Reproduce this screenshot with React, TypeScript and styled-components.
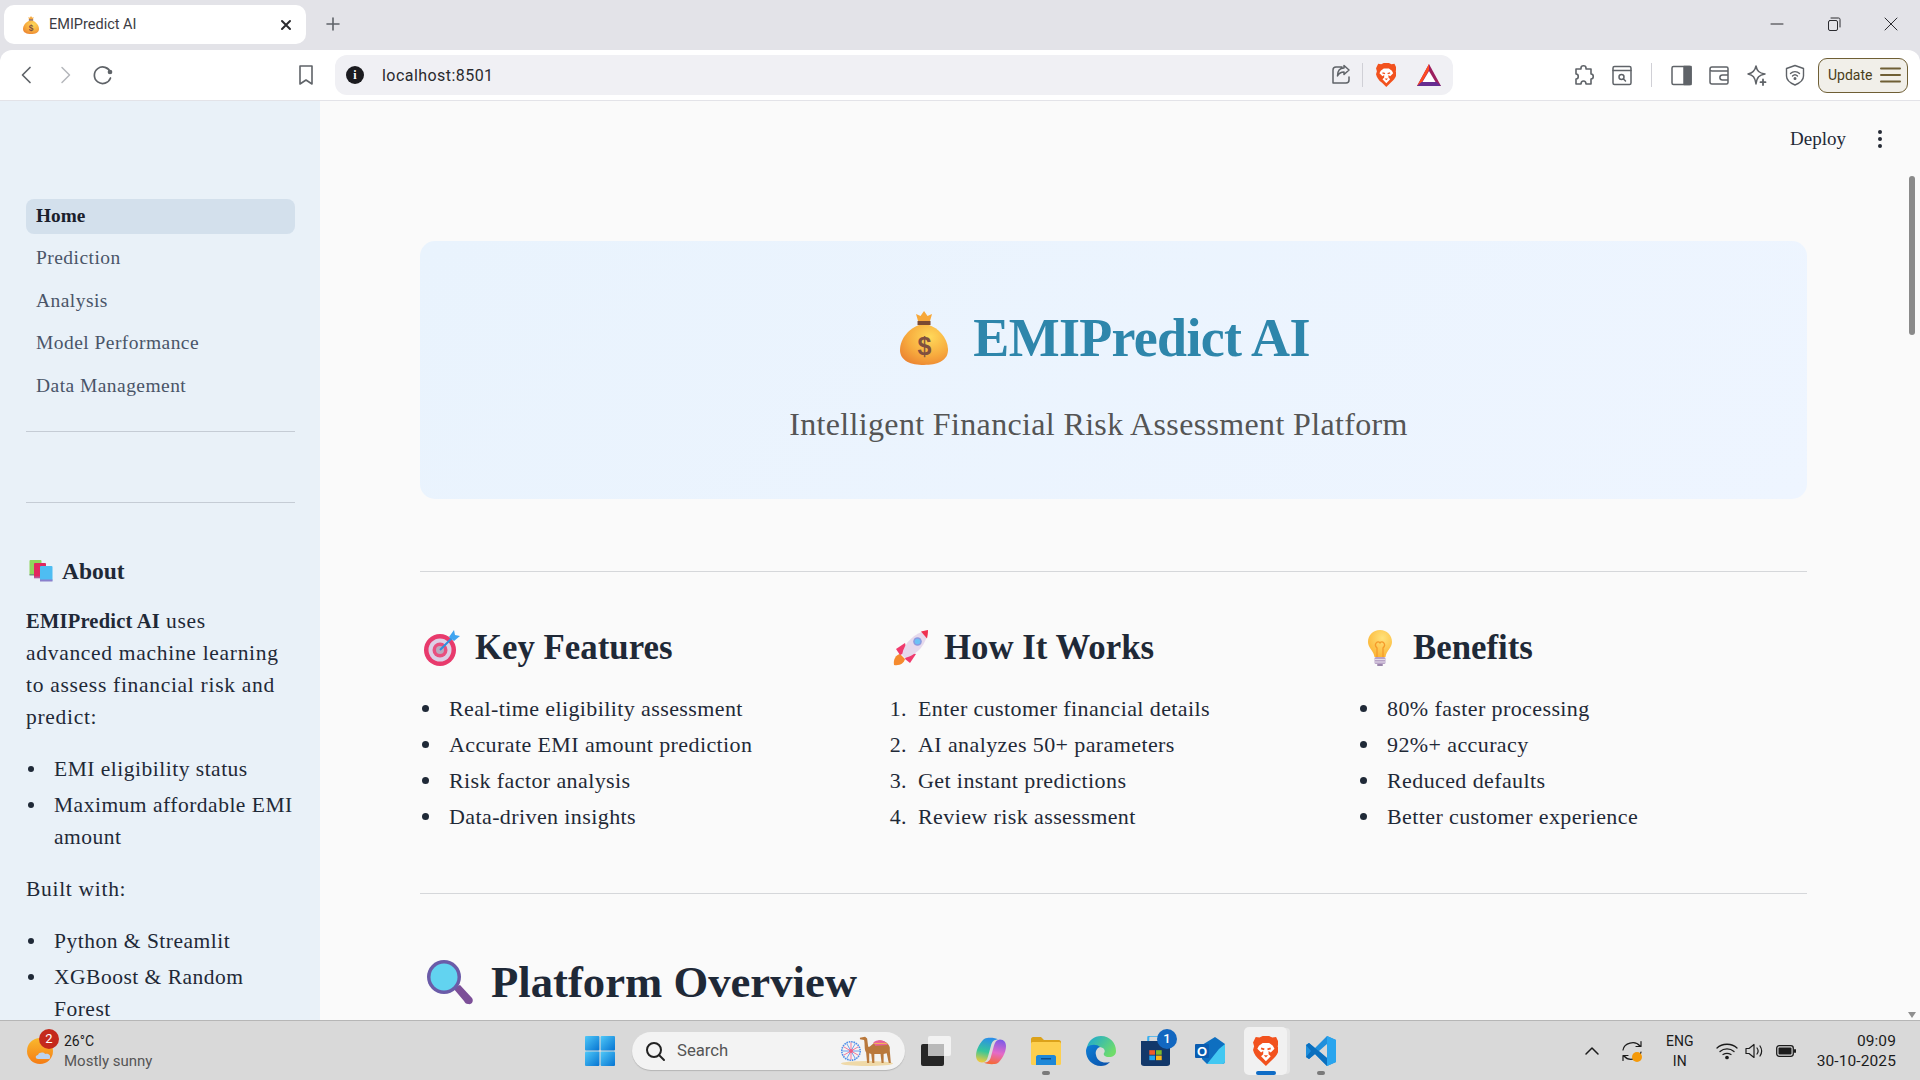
import React, { useId } from "react";
import styled, { createGlobalStyle, css } from "styled-components";

const SERIF = `"Liberation Serif", "Noto Serif", serif`;
const UI = `Roboto, "Open Sans", sans-serif`;

const GlobalStyle = createGlobalStyle`
  html, body { margin: 0; padding: 0; height: 100%; overflow: hidden; }
  #root { height: 100%; }
  * { box-sizing: border-box; }
`;

/* ---------- emoji drawings ---------- */

function MoneyBag({ size }: { size: number }) {
  const id = useId();
  return (
    <svg width={size * 0.89} height={size} viewBox="0 0 48 54">
      <defs>
        <radialGradient id={id} cx="0.62" cy="0.3" r="0.85">
          <stop offset="0" stopColor="#ffd95a" />
          <stop offset="0.55" stopColor="#f7ab3e" />
          <stop offset="1" stopColor="#e97b2e" />
        </radialGradient>
      </defs>
      <path d="M16 3 L20.5 5 L24 0 L27.5 5 L32 3 L30 10 H18 Z" fill="#f7a83a" />
      <rect x="17.5" y="10" width="13" height="4" fill="#7b4a32" />
      <path d="M19 14 H29 C38 17 48 27 48 39 C48 50 37 54 24 54 C11 54 0 50 0 39 C0 27 10 17 19 14 Z" fill={`url(#${id})`} />
      <text x="24" y="44" textAnchor="middle" fontSize="25" fontWeight="700" fontFamily="Liberation Sans, sans-serif" fill="#80503f">$</text>
    </svg>
  );
}

function Books() {
  return (
    <svg width="24" height="22" viewBox="0 0 24 22">
      <rect x="0.5" y="0" width="12" height="15" rx="1" fill="#8fd65c" />
      <rect x="0.5" y="14" width="12" height="1.5" fill="#6f9c7a" />
      <rect x="5" y="3" width="12" height="15" rx="1" fill="#e2275f" />
      <rect x="5" y="16.5" width="12" height="1.8" fill="#b9559a" />
      <rect x="11" y="6" width="12.5" height="15" rx="1" fill="#4ebdf2" />
      <rect x="11" y="19.5" width="12.5" height="2" fill="#8a80cc" />
    </svg>
  );
}

function TargetEmoji() {
  return (
    <svg width="36" height="36" viewBox="0 0 36 36">
      <circle cx="16" cy="20" r="16" fill="#e83a6c" />
      <circle cx="16" cy="20" r="11.5" fill="#dcd0e6" />
      <circle cx="16" cy="20" r="7.5" fill="#e8507f" />
      <circle cx="16" cy="20" r="4" fill="#b9aabf" />
      <path d="M16 20 L30 6" stroke="#2f8fe0" strokeWidth="2" />
      <path d="M25 7 L30 0 L31 5 L36 6 L30 11 Z" fill="#3fa4f0" />
    </svg>
  );
}

function RocketEmoji() {
  return (
    <svg width="36" height="36" viewBox="0 0 36 36">
      <path d="M1 35 C0 29 3 25 7 24 L12 29 C11 33 7 36 1 35 Z" fill="#f58a2e" />
      <path d="M3 19 L12 13 L14 22 L7 25 Z" fill="#f03a6d" />
      <path d="M17 33 L23 24 L14 22 L12 29 Z" fill="#f03a6d" />
      <path d="M9 25 C11 13 21 3 35 0 C34 14 24 25 12 28 Z" fill="#e6d9ec" />
      <path d="M28 1.500 L35 0 C35 3 34.500 6 34 8.500 Z" fill="#f0304f" />
      <circle cx="24.500" cy="11.500" r="4.300" fill="#8d9ae0" />
      <circle cx="24.500" cy="11.500" r="2.800" fill="#6cc1f5" />
    </svg>
  );
}

function BulbEmoji() {
  const id = useId();
  return (
    <svg width="24" height="36" viewBox="0 0 24 36">
      <defs>
        <radialGradient id={id} cx="0.6" cy="0.3" r="0.8">
          <stop offset="0" stopColor="#ffe27a" />
          <stop offset="1" stopColor="#fbb02e" />
        </radialGradient>
      </defs>
      <path d="M12 0 C19 0 24 5 24 12 C24 18 18 21 17.500 27 H6.500 C6 21 0 18 0 12 C0 5 5 0 12 0 Z" fill={`url(#${id})`} />
      <path d="M9 27 V18 C5 14 10 10 12 13 C14 10 19 14 15 18 V27" fill="none" stroke="#f59a2a" strokeWidth="1.300" />
      <rect x="6.500" y="27" width="11" height="7" rx="1.500" fill="#b8a3c6" />
      <rect x="6.500" y="29" width="11" height="1" fill="#e4dcea" />
      <rect x="6.500" y="31.500" width="11" height="1" fill="#e4dcea" />
      <rect x="9" y="34" width="6" height="2" rx="1" fill="#9a86ab" />
    </svg>
  );
}

function LensEmoji() {
  return (
    <svg width="48" height="46" viewBox="0 0 48 46">
      <path d="M27 29 L34 26 L46 39 C48 42 46 46 42 45 C40 45 39 44 38 42 Z" fill="#7c4f98" />
      <circle cx="18" cy="18" r="17" fill="#6a5ba8" />
      <circle cx="18" cy="18" r="13.500" fill="#62d3f0" />
    </svg>
  );
}

/* ---------- brand marks ---------- */

function BraveMark({ size }: { size: number }) {
  return (
    <svg width={size * 0.86} height={size} viewBox="0 0 24 28">
      <path d="M6 1.500 L9 0 H15 L18 1.500 L21.500 1 L24 6 L23 9.500 L24 13 C23 17 21 20 17 23 L12 28 L7 23 C3 20 1 17 0 13 L1 9.500 L0 6 L2.500 1 Z" fill="#f2521e" />
      <path d="M5.500 9 L9 6.500 H15 L18.500 9 L20 12 L16.500 15.500 L14.500 14 L14.500 17 L16.500 19 L12 23.500 L7.500 19 L9.500 17 L9.500 14 L7.500 15.500 L4 12 Z" fill="#fff" />
      <path d="M7.500 11.500 L10.500 12.500 M16.500 11.500 L13.500 12.500" stroke="#f2521e" strokeWidth="1.600" />
      <path d="M10 18 H14 L12 20 Z" fill="#f2521e" />
    </svg>
  );
}

function BatMark() {
  return (
    <svg width="24" height="22" viewBox="0 0 24 22">
      <path d="M12 0 L24 22 H0 Z" fill="#9c1f5f" />
      <path d="M12 0 L12 6 L4.500 19 L0 22 Z" fill="#ff4b22" />
      <path d="M0 22 L4.500 18 H19.500 L24 22 Z" fill="#662d91" />
      <path d="M12 7 L18.500 18 H5.500 Z" fill="#fff" />
    </svg>
  );
}

function WindowsLogo() {
  const id = useId();
  return (
    <svg width="30" height="30" viewBox="0 0 30 30">
      <defs>
        <linearGradient id={id} x1="0" y1="0" x2="1" y2="1">
          <stop offset="0" stopColor="#4fc8f8" />
          <stop offset="1" stopColor="#0674d2" />
        </linearGradient>
      </defs>
      <rect x="0" y="0" width="14.400" height="14.400" rx="1" fill={`url(#${id})`} />
      <rect x="15.600" y="0" width="14.400" height="14.400" rx="1" fill={`url(#${id})`} />
      <rect x="0" y="15.600" width="14.400" height="14.400" rx="1" fill={`url(#${id})`} />
      <rect x="15.600" y="15.600" width="14.400" height="14.400" rx="1" fill={`url(#${id})`} />
    </svg>
  );
}

function FairScene() {
  const spokes = Array.from({ length: 12 }, (_, i) => (i * Math.PI) / 6);
  return (
    <svg width="52" height="30" viewBox="0 0 52 30">
      <ellipse cx="26" cy="27.500" rx="26" ry="2.500" fill="#efd9a8" />
      <circle cx="10" cy="15" r="9.200" fill="none" stroke="#4f8fe8" strokeWidth="1.600" strokeDasharray="1.600 0.800" />
      {spokes.map((a, i) => (
        <line key={a} x1="10" y1="15" x2={10 + 8.500 * Math.cos(a)} y2={15 + 8.500 * Math.sin(a)} stroke={i % 2 ? "#f0789a" : "#6aa0ee"} strokeWidth="1" />
      ))}
      <circle cx="10" cy="15" r="2" fill="#ef5f86" />
      <g transform="translate(-2.700 0) scale(1.030 0.820)">
        <path d="M21 2 L26 1 L28 3 L29 13 C31 14 33 9 38 6 C43 4 49 8 50 14 L50 18 L51 33 H49 L47 21 L44 22 L44 33 H42 L41 22 L35 22 L35 33 H33 L32 22 L30 21 L30 33 H28 L27 20 C25 17 26 10 25 5 L21 4 Z" fill="#b9783c" />
        <path d="M34 8 C38 3 46 5 48 11 L36 12 Z" fill="#e9609a" />
        <path d="M35 9 L47 9" stroke="#f3c04e" strokeWidth="1.200" />
      </g>
    </svg>
  );
}

function TaskView() {
  return (
    <svg width="30" height="30" viewBox="0 0 30 30">
      <rect x="0" y="8" width="23" height="22" rx="2" fill="#262626" />
      <rect x="7" y="0" width="23" height="20" rx="2" fill="#f6f6f6" fillOpacity="0.85" />
      <rect x="7" y="8" width="16" height="12" fill="#b9b9b9" />
    </svg>
  );
}

function Copilot() {
  const a = useId();
  const b = useId();
  const lobe = "M9 1 C11 0 20 0 22 2 C18 2 16 4 15 8 L12 19 C11 23 9 25 6 25 C2 25 0 22 0 18 C0 12 5 3 9 1 Z";
  return (
    <svg width="30" height="28" viewBox="0 0 30 27">
      <defs>
        <linearGradient id={a} x1="0.5" y1="0" x2="0.3" y2="1">
          <stop offset="0" stopColor="#2a8fe8" />
          <stop offset="0.55" stopColor="#36c79a" />
          <stop offset="1" stopColor="#f4c93a" />
        </linearGradient>
        <linearGradient id={b} x1="0.5" y1="0" x2="0.3" y2="1">
          <stop offset="0" stopColor="#f56a3a" />
          <stop offset="0.45" stopColor="#e56ac8" />
          <stop offset="1" stopColor="#7a5ae8" />
        </linearGradient>
      </defs>
      <path d={lobe} fill={`url(#${a})`} />
      <path d={lobe} transform="rotate(180 15 13.500)" fill={`url(#${b})`} />
    </svg>
  );
}

function Explorer() {
  return (
    <svg width="30" height="28" viewBox="0 0 30 28">
      <path d="M0 2 C0 1 1 0 2 0 H10 L13 3 H28 C29 3 30 4 30 5 V10 H0 Z" fill="#dca21a" />
      <rect x="0" y="5" width="30" height="23" rx="1.500" fill="#fdcf4e" />
      <path d="M5 28 V20 C5 19 6 18 7 18 H23 C24 18 25 19 25 20 V28 Z" fill="#1e88d8" />
      <rect x="10" y="21" width="10" height="1.500" fill="#0c4f8e" />
    </svg>
  );
}

function Edge() {
  const a = useId();
  const b = useId();
  return (
    <svg width="30" height="30" viewBox="0 0 30 30">
      <defs>
        <linearGradient id={a} x1="0" y1="0" x2="1" y2="0.6">
          <stop offset="0" stopColor="#19a6d8" />
          <stop offset="1" stopColor="#6fdc6a" />
        </linearGradient>
        <linearGradient id={b} x1="0" y1="0" x2="1" y2="1">
          <stop offset="0" stopColor="#0e7fd6" />
          <stop offset="1" stopColor="#0a4fa8" />
        </linearGradient>
      </defs>
      <path d="M1 11 C3 4 8 0 15 0 C24 0 30 7 30 15 C30 19 27 21 23 21 C19 21 17 19 18 17 C20 15 18 11 13 11 C8 11 4 12 1 11 Z" fill={`url(#${a})`} />
      <path d="M1 11 C5 8 11 8 14 11 C11 12 9 15 10 19 C11 25 17 28 24 26 C21 29 18 30 15 30 C6 30 0 23 0 15 C0 14 0.500 12 1 11 Z" fill={`url(#${b})`} />
    </svg>
  );
}

function Store() {
  return (
    <svg width="29" height="30" viewBox="1 2 28 36" preserveAspectRatio="none">
      <path d="M1 8 H29 V35 C29 37 28 38 26 38 H4 C2 38 1 37 1 35 Z" fill="#12386a" />
      <path d="M8 8 V4 C8 3 9 2 10 2 H20 C21 2 22 3 22 4 V8" fill="none" stroke="#3ab0f0" strokeWidth="2" />
      <rect x="9" y="19" width="5.500" height="5.500" fill="#f05a2a" />
      <rect x="15.500" y="19" width="5.500" height="5.500" fill="#7fba2a" />
      <rect x="9" y="25.500" width="5.500" height="5.500" fill="#20a4ef" />
      <rect x="15.500" y="25.500" width="5.500" height="5.500" fill="#fdb91a" />
    </svg>
  );
}

function Outlook() {
  return (
    <svg width="32" height="28" viewBox="0 0 32 28">
      <path d="M7 8 L20 0 L30 7 V24 C30 26 29 27 27 27 H12 L7 22 Z" fill="#0e6fc0" />
      <path d="M12 27 L24 12 L30 7 V24 C30 26 29 27 27 27 Z" fill="#42c8f2" />
      <rect x="0" y="7" width="14" height="14" rx="1" fill="#0a5cb0" />
      <text x="7" y="18.500" textAnchor="middle" fontSize="13" fontWeight="700" fontFamily="Liberation Sans, sans-serif" fill="#fff">O</text>
    </svg>
  );
}

function VSCode() {
  return (
    <svg width="30" height="30" viewBox="0 0 30 30">
      <path d="M21 0 L30 4 V26 L21 30 L9 18 L3 23 L0 21 V9 L3 7 L9 12 Z M21 8 L13 15 L21 22 Z" fill="#1f8fdc" fillRule="evenodd" />
      <path d="M21 0 L30 4 V26 L21 30 Z M21 8 V22 L21 8 Z" fill="#2aa5ee" />
      <path d="M0 9 L3 7 L21 22 V30 L9 18 L3 23 L0 21 L5 15 Z" fill="#0b6fbe" />
    </svg>
  );
}

/* ---------- stroke icons ---------- */

const Stroke = ({ w = 24, h = 24, sw = 1.6, color = "#5f6368", children }: { w?: number; h?: number; sw?: number; color?: string; children: React.ReactNode }) => (
  <svg width={w} height={h} viewBox={`0 0 ${w} ${h}`} fill="none" stroke={color} strokeWidth={sw} strokeLinecap="round" strokeLinejoin="round">
    {children}
  </svg>
);

/* ---------- layout ---------- */

const Screen = styled.div`
  height: 100vh;
  display: flex;
  flex-direction: column;
  background: #e3e3e8;
  overflow: hidden;
`;

const TabStrip = styled.div`
  height: 50px;
  display: flex;
  align-items: flex-start;
  flex: none;
`;

const Tab = styled.div`
  width: 302px;
  height: 39px;
  margin: 5px 0 0 4px;
  padding: 0 14px 0 19px;
  background: #fff;
  border-radius: 10px;
  display: flex;
  align-items: center;
  font: 14.5px ${UI};
  color: #3c3c43;
`;

const TabTitle = styled.span`
  margin-left: 10px;
  flex: 1;
`;

const NewTab = styled.div`
  margin: 12px 0 0 15px;
  width: 24px;
  height: 24px;
`;

const WindowControls = styled.div`
  margin-left: auto;
  display: flex;
  margin-right: 1px;
`;

const WindowBtn = styled.div`
  width: 57px;
  height: 48px;
  display: flex;
  align-items: center;
  justify-content: center;
`;

const Toolbar = styled.div`
  height: 51px;
  flex: none;
  background: #fff;
  border-radius: 12px 12px 0 0;
  border-bottom: 1px solid #e3e3e8;
  display: flex;
  align-items: center;
  padding-left: 8px;
`;

const IconBtn = styled.div<{ $ml?: number }>`
  width: 38px;
  height: 38px;
  flex: none;
  margin-left: ${(p) => p.$ml ?? 0}px;
  display: flex;
  align-items: center;
  justify-content: center;
`;

const UrlBar = styled.div`
  width: 1118px;
  height: 40px;
  margin-left: 10px;
  padding: 0 10px 0 11px;
  flex: none;
  background: #f0f0f4;
  border-radius: 12px;
  display: flex;
  align-items: center;
  font: 16px ${UI};
  color: #2a2a2e;
`;

const UrlInfo = styled.div`
  width: 18px;
  height: 18px;
  border-radius: 50%;
  background: #1c1c20;
  color: #fff;
  font: 700 12px/18px "Liberation Serif", serif;
  text-align: center;
  margin-right: 18px;
`;

const UrlText = styled.span`
  flex: 1;
  letter-spacing: 0.45px;
`;

const UrlIcon = styled.div<{ $w: number; $ml?: number }>`
  width: ${(p) => p.$w}px;
  margin-left: ${(p) => p.$ml ?? 0}px;
  display: flex;
  justify-content: center;
  align-items: center;
`;

const BarDivider = styled.div<{ $h: number; $ml?: number; $mr?: number }>`
  width: 1px;
  height: ${(p) => p.$h}px;
  background: #d0d0d6;
  flex: none;
  margin: 0 ${(p) => p.$mr ?? 0}px 0 ${(p) => p.$ml ?? 0}px;
`;

const UpdateBtn = styled.div`
  width: 90px;
  height: 35px;
  margin-left: 4px;
  flex: none;
  border: 1.5px solid #6f5f35;
  border-radius: 9px;
  background: #f1efe9;
  display: flex;
  align-items: center;
  justify-content: space-between;
  padding: 0 6px 0 9px;
  font: 14px ${UI};
  color: #4a3d18;
`;

const Body = styled.div`
  flex: 1;
  min-height: 0;
  display: flex;
  position: relative;
`;

const Sidebar = styled.aside`
  width: 320px;
  flex: none;
  background: #e9f1f8;
  padding: 98px 25px 0 26px;
  font-family: ${SERIF};
  color: #1f2937;
  overflow: hidden;
`;

const NavList = styled.nav`
  display: flex;
  flex-direction: column;
  gap: 7.4px;
`;

const NavItem = styled.div<{ $active?: boolean }>`
  height: 35px;
  line-height: 34px;
  padding-left: 10px;
  border-radius: 8px;
  font-size: ${(p) => (p.$active ? 19.3 : 19.5)}px;
  letter-spacing: ${(p) => (p.$active ? 0 : 0.45)}px;
  background: ${(p) => (p.$active ? "#d3e0ec" : "transparent")};
  color: ${(p) => (p.$active ? "#1a202c" : "#4a5568")};
  font-weight: ${(p) => (p.$active ? 700 : 400)};
`;

const Rule = styled.hr<{ $mt: number; $color?: string }>`
  border: 0;
  height: 1px;
  margin: ${(p) => p.$mt}px 0 0;
  background: ${(p) => p.$color ?? "#c5ccd5"};
`;

const AboutTitle = styled.h3`
  margin: 52px 0 0;
  display: flex;
  align-items: center;
  gap: 9px;
  padding-left: 3px;
  font-size: 23.5px;
  line-height: 32px;
  font-weight: 700;
  color: #1f2937;
`;

const SideText = styled.p<{ $mt: number }>`
  margin: ${(p) => p.$mt}px 0 0;
  font-size: 21.5px;
  line-height: 32px;
  letter-spacing: 0.7px;

  strong {
    font-size: 20.5px;
    letter-spacing: 0.22px;
  }
`;

const SideList = styled.ul`
  margin: 20px 0 0;
  padding-left: 28px;
  list-style: none;
  font-size: 21.5px;
  line-height: 32px;
  letter-spacing: 0.5px;

  li + li {
    margin-top: 4px;
  }
`;

const SideItem = styled.li`
  position: relative;

  &::before {
    content: "";
    position: absolute;
    left: -26px;
    top: 13px;
    width: 6px;
    height: 6px;
    border-radius: 50%;
    background: #1f2937;
  }
`;

const Main = styled.main`
  flex: 1;
  min-width: 0;
  background: #fafafa;
  font-family: ${SERIF};
  color: #1f2937;
  overflow: hidden;
`;

const MainHeader = styled.header`
  height: 76px;
  display: flex;
  align-items: center;
  justify-content: flex-end;
  padding-right: 38px;
  gap: 32px;
  font-size: 19px;
  color: #1f2937;
`;

const Kebab = styled.div`
  width: 4px;
  display: flex;
  flex-direction: column;
  gap: 3px;

  i {
    width: 4px;
    height: 4px;
    border-radius: 50%;
    background: #262b36;
  }
`;

const Content = styled.div`
  padding: 64px 113px 0 100px;
`;

const Hero = styled.section`
  height: 258px;
  border-radius: 15px;
  background: linear-gradient(135deg, #e9f3fd, #eef5ff);
  display: flex;
  flex-direction: column;
  align-items: center;
  padding: 67px 17px 0 0;
`;

const HeroTitle = styled.h1`
  margin: 0;
  display: flex;
  align-items: center;
  gap: 25px;
  font-size: 54px;
  line-height: 60px;
  letter-spacing: -0.7px;
  font-weight: 700;
  color: #2e86ab;
`;

const HeroSub = styled.p`
  margin: 36px 13px 0 0;
  font-size: 32px;
  line-height: 40px;
  letter-spacing: 0.35px;
  color: #555;
`;

const Columns = styled.div`
  display: grid;
  grid-template-columns: repeat(3, 449px);
  gap: 20px;
  margin-top: 56px;
`;

const ColTitle = styled.h2`
  margin: 0;
  padding-left: 4px;
  height: 40px;
  display: flex;
  align-items: center;
  gap: 15px;
  font-size: 34.8px;
  line-height: 42px;
  font-weight: 700;
  color: #1f2937;
`;

const ColIcon = styled.span`
  width: 36px;
  display: flex;
  justify-content: center;
  align-items: center;
`;

const listType = css`
  margin: 23px 0 0;
  padding-left: 29px;
  font-size: 22px;
  line-height: 36px;
  letter-spacing: 0.4px;
  list-style: none;
`;

const BulletList = styled.ul`
  ${listType}
`;

const BulletItem = styled.li`
  position: relative;

  &::before {
    content: "";
    position: absolute;
    left: -27px;
    top: 14px;
    width: 7px;
    height: 7px;
    border-radius: 50%;
    background: #1f2937;
  }
`;

const NumberList = styled.ol`
  ${listType}
  counter-reset: step;
`;

const NumberItem = styled.li`
  position: relative;
  counter-increment: step;

  &::before {
    content: counter(step) ".";
    position: absolute;
    right: 100%;
    padding-right: 11px;
  }
`;

const OverviewTitle = styled.h2`
  margin: 60px 0 0;
  padding-left: 6px;
  display: flex;
  align-items: center;
  gap: 17px;
  font-size: 44.7px;
  line-height: 56px;
  font-weight: 700;
  color: #1f2937;
`;

const ScrollThumb = styled.div`
  position: absolute;
  right: 5px;
  top: 75px;
  width: 6px;
  height: 159px;
  border-radius: 3px;
  background: #8a8a8a;
`;

const ScrollArrow = styled.div`
  position: absolute;
  right: 4px;
  bottom: 2px;
  width: 0;
  height: 0;
  border-left: 4px solid transparent;
  border-right: 4px solid transparent;
  border-top: 6px solid #8f8f8f;
`;

/* ---------- taskbar ---------- */

const Taskbar = styled.footer`
  height: 60px;
  flex: none;
  border-top: 1px solid #b6b6b6;
  background: #d9d9d9;
  display: grid;
  grid-template-columns: 1fr auto 1fr;
  align-items: center;
  font-family: ${UI};
  color: #1c1c1c;
`;

const Weather = styled.div`
  display: flex;
  align-items: center;
  padding-left: 27px;
  gap: 9px;
  font-size: 14px;
  line-height: 20px;
`;

const WeatherIcon = styled.div`
  position: relative;
  width: 28px;
  height: 26px;
`;

const WeatherBadge = styled.span`
  position: absolute;
  top: -9px;
  right: -4px;
  width: 20px;
  height: 20px;
  border-radius: 50%;
  background: #c4291c;
  color: #fff;
  font-size: 13px;
  line-height: 20px;
  text-align: center;
`;

const WeatherNote = styled.div`
  color: #555;
  font-size: 15px;
`;

const Dock = styled.div`
  display: flex;
  align-items: center;
  margin-left: 13px;
`;

const DockSlot = styled.div<{ $active?: boolean; $open?: boolean }>`
  position: relative;
  width: 55px;
  height: 48px;
  display: flex;
  align-items: center;
  justify-content: center;
  ${(p) =>
    p.$active
      ? `background: #f1f1f1; border-radius: 5px; width: 43px; margin: 0 6px; box-shadow: 4px 0 0 -1px #e6e6e6;`
      : ""}

  &::after {
    content: "";
    display: ${(p) => (p.$open || p.$active ? "block" : "none")};
    position: absolute;
    bottom: 0;
    left: 50%;
    transform: translateX(-50%);
    height: 4px;
    border-radius: 2px;
    width: ${(p) => (p.$active ? 20 : 8)}px;
    background: ${(p) => (p.$active ? "#0f6cc6" : "#7a7a7a")};
  }
`;

const DockBadge = styled.span`
  position: absolute;
  top: 2px;
  right: 6px;
  width: 20px;
  height: 20px;
  border-radius: 50%;
  background: #1267c0;
  color: #fff;
  font-size: 13px;
  font-weight: 500;
  line-height: 20px;
  text-align: center;
`;

const SearchBox = styled.div`
  width: 273px;
  height: 38px;
  margin: 0 3px 0 17px;
  padding: 0 12px 0 12px;
  border-radius: 19px;
  background: #f3f3f3;
  box-shadow: 0 1px 1px #b5b5b5;
  display: flex;
  align-items: center;
  gap: 11px;
  font-size: 16.7px;
  color: #555;
`;

const SearchLabel = styled.span`
  flex: 1;
`;

const Tray = styled.div`
  display: flex;
  align-items: center;
  justify-content: flex-end;
  padding-right: 24px;
`;

const TraySlot = styled.div<{ $w: number }>`
  width: ${(p) => p.$w}px;
  display: flex;
  justify-content: center;
  align-items: center;
  position: relative;
`;

const SyncDot = styled.span`
  position: absolute;
  right: 16px;
  bottom: 0;
  width: 10px;
  height: 10px;
  border-radius: 50%;
  background: #f59a0a;
`;

const Lang = styled.div`
  width: 44px;
  margin-right: 11px;
  font-size: 14px;
  line-height: 20px;
  text-align: center;
`;

const Clock = styled.div`
  margin-left: 16px;
  font-size: 15.5px;
  line-height: 20px;
  letter-spacing: 0.1px;
  text-align: right;
`;

export default function App() {
  return (
    <Screen>
      <GlobalStyle />

      <TabStrip>
        <Tab>
          <MoneyBag size={18} />
          <TabTitle>EMIPredict AI</TabTitle>
          <Stroke w={12} h={12} sw={2} color="#2b2b2f">
            <path d="M2 2 L10 10 M10 2 L2 10" />
          </Stroke>
        </Tab>
        <NewTab>
          <Stroke sw={1.6} color="#5f6368">
            <path d="M12 6 V18 M6 12 H18" />
          </Stroke>
        </NewTab>
        <WindowControls>
          <WindowBtn>
            <Stroke w={14} h={14} sw={1} color="#2b2b2f">
              <path d="M1 7 H13" />
            </Stroke>
          </WindowBtn>
          <WindowBtn>
            <Stroke w={14} h={14} sw={1} color="#2b2b2f">
              <rect x="1.500" y="3.500" width="9" height="10" rx="1.500" />
              <path d="M4 1 H11.500 C12.500 1 13 1.500 13 2.500 V10" />
            </Stroke>
          </WindowBtn>
          <WindowBtn>
            <Stroke w={14} h={14} sw={1} color="#2b2b2f">
              <path d="M1 1 L13 13 M13 1 L1 13" />
            </Stroke>
          </WindowBtn>
        </WindowControls>
      </TabStrip>

      <Toolbar>
        <IconBtn>
          <Stroke sw={1.7}>
            <path d="M15 4.500 L7.500 12 L15 19.500" />
          </Stroke>
        </IconBtn>
        <IconBtn>
          <Stroke sw={1.5} color="#b5b7bb">
            <path d="M9 4.500 L16.500 12 L9 19.500" />
          </Stroke>
        </IconBtn>
        <IconBtn>
          <Stroke sw={1.7}>
            <path d="M19.500 9.500 A8.300 8.300 0 1 0 19.500 15" />
            <circle cx="19" cy="9" r="1.500" fill="#5f6368" />
          </Stroke>
        </IconBtn>
        <IconBtn $ml={165}>
          <Stroke sw={1.6}>
            <path d="M6 3 H18 V21 L12 17 L6 21 Z" />
          </Stroke>
        </IconBtn>
        <UrlBar>
          <UrlInfo>i</UrlInfo>
          <UrlText>localhost:8501</UrlText>
          <UrlIcon $w={28}>
            <Stroke sw={1.5}>
              <path d="M13 4 H7 C4.500 4 4 5 4 7 V20 H17 C19 20 20 19 20 17 V14 M20 7 L15 2.500 V5 C11 5 8.500 8 8.500 13 C10 10 12 9 15 9 V11.500 Z" />
            </Stroke>
          </UrlIcon>
          <BarDivider $h={24} $ml={7} $mr={11} />
          <UrlIcon $w={24}>
            <BraveMark size={24} />
          </UrlIcon>
          <UrlIcon $w={28} $ml={17}>
            <BatMark />
          </UrlIcon>
        </UrlBar>
        <IconBtn $ml={112}>
          <Stroke sw={1.6}>
            <path d="M9 5 C9 2 14 2 14 5 V6 H19 V11 C22 11 22 16 19 16 V21 H14 C14 17 9 17 9 21 H4 V16 C7 16 7 11 4 11 V6 H9 Z" />
          </Stroke>
        </IconBtn>
        <IconBtn>
          <Stroke sw={1.5}>
            <rect x="3" y="3.500" width="18" height="18" rx="1.500" />
            <path d="M3 7.500 H21" />
            <circle cx="11.500" cy="14" r="2.500" />
            <path d="M13.500 16 L15.500 18" />
          </Stroke>
        </IconBtn>
        <BarDivider $h={24} $ml={10} $mr={10} />
        <IconBtn>
          <Stroke sw={1.5}>
            <rect x="3" y="3.500" width="19" height="18" rx="1.500" />
            <rect x="15" y="3.500" width="7" height="18" fill="#5f6368" />
          </Stroke>
        </IconBtn>
        <IconBtn>
          <Stroke sw={1.5}>
            <path d="M21 8 V5.500 C21 4.500 20.500 4 19.500 4 H5 C3.500 4 3 5 3 6 V19 C3 20.500 4 21 5 21 H19.500 C20.500 21 21 20.500 21 19.500 V17 M3 6.500 C3 8 4 8 5 8 H21 V17 H15.500 C12 17 12 12 15.500 12 H21" />
          </Stroke>
        </IconBtn>
        <IconBtn>
          <Stroke sw={1.5}>
            <path d="M11 3 C12 8 14 10 20 11 C14 12 12 14 11 21 C10 14 8 12 3 11 C8 10 10 8 11 3 Z" />
            <path d="M18 16.500 V22 M15.500 19.200 H20.500" strokeWidth={1.8} />
          </Stroke>
        </IconBtn>
        <IconBtn>
          <Stroke sw={1.4}>
            <path d="M12 2.500 L20.500 5.500 V13 C20.500 17 17 20 12 22 C7 20 3.500 17 3.500 13 V5.500 Z" />
            <path d="M7.500 10.500 C10 8 14 8 16.500 10.500 M9.500 13 C11 11.500 13 11.500 14.500 13" />
            <circle cx="12" cy="15.500" r="0.800" fill="#5f6368" />
          </Stroke>
        </IconBtn>
        <UpdateBtn>
          Update
          <Stroke w={21} h={18} sw={2} color="#6f5f35">
            <path d="M1 2.500 H20 M1 9 H20 M1 15.500 H20" />
          </Stroke>
        </UpdateBtn>
      </Toolbar>

      <Body>
        <Sidebar>
          <NavList>
            <NavItem $active>Home</NavItem>
            <NavItem>Prediction</NavItem>
            <NavItem>Analysis</NavItem>
            <NavItem>Model Performance</NavItem>
            <NavItem>Data Management</NavItem>
          </NavList>
          <Rule $mt={27} />
          <Rule $mt={70} />
          <AboutTitle>
            <Books /> About
          </AboutTitle>
          <SideText $mt={18}>
            <strong>EMIPredict AI</strong> uses advanced machine learning to assess financial risk and predict:
          </SideText>
          <SideList>
            <SideItem>EMI eligibility status</SideItem>
            <SideItem>Maximum affordable EMI amount</SideItem>
          </SideList>
          <SideText $mt={20}>Built with:</SideText>
          <SideList>
            <SideItem>Python &amp; Streamlit</SideItem>
            <SideItem>XGBoost &amp; Random Forest</SideItem>
          </SideList>
        </Sidebar>

        <Main>
          <MainHeader>
            <span>Deploy</span>
            <Kebab>
              <i />
              <i />
              <i />
            </Kebab>
          </MainHeader>
          <Content>
            <Hero>
              <HeroTitle>
                <MoneyBag size={54} /> EMIPredict AI
              </HeroTitle>
              <HeroSub>Intelligent Financial Risk Assessment Platform</HeroSub>
            </Hero>
            <Rule $mt={72} $color="#d5d7da" />
            <Columns>
              <div>
                <ColTitle>
                  <ColIcon>
                    <TargetEmoji />
                  </ColIcon>
                  Key Features
                </ColTitle>
                <BulletList>
                  <BulletItem>Real-time eligibility assessment</BulletItem>
                  <BulletItem>Accurate EMI amount prediction</BulletItem>
                  <BulletItem>Risk factor analysis</BulletItem>
                  <BulletItem>Data-driven insights</BulletItem>
                </BulletList>
              </div>
              <div>
                <ColTitle>
                  <ColIcon>
                    <RocketEmoji />
                  </ColIcon>
                  How It Works
                </ColTitle>
                <NumberList>
                  <NumberItem>Enter customer financial details</NumberItem>
                  <NumberItem>AI analyzes 50+ parameters</NumberItem>
                  <NumberItem>Get instant predictions</NumberItem>
                  <NumberItem>Review risk assessment</NumberItem>
                </NumberList>
              </div>
              <div>
                <ColTitle>
                  <ColIcon>
                    <BulbEmoji />
                  </ColIcon>
                  Benefits
                </ColTitle>
                <BulletList>
                  <BulletItem>80% faster processing</BulletItem>
                  <BulletItem>92%+ accuracy</BulletItem>
                  <BulletItem>Reduced defaults</BulletItem>
                  <BulletItem>Better customer experience</BulletItem>
                </BulletList>
              </div>
            </Columns>
            <Rule $mt={58} $color="#d5d7da" />
            <OverviewTitle>
              <LensEmoji /> Platform Overview
            </OverviewTitle>
          </Content>
        </Main>
        <ScrollThumb />
        <ScrollArrow />
      </Body>

      <Taskbar>
        <Weather>
          <WeatherIcon>
            <svg width="28" height="26" viewBox="0 0 28 26">
              <defs>
                <linearGradient id="sunGrad" x1="0" y1="0" x2="0" y2="1">
                  <stop offset="0" stopColor="#f9b92e" />
                  <stop offset="1" stopColor="#f57c14" />
                </linearGradient>
              </defs>
              <circle cx="13" cy="13" r="13" fill="url(#sunGrad)" />
              <path d="M11 21 C8 21 8 17 11 17 C12 14 17 14 18 16 C21 15 24 17 23 20 C23 21 22 21 21 21 Z" fill="#bcd3ee" />
            </svg>
            <WeatherBadge>2</WeatherBadge>
          </WeatherIcon>
          <div>
            <div>26°C</div>
            <WeatherNote>Mostly sunny</WeatherNote>
          </div>
        </Weather>

        <Dock>
          <WindowsLogo />
          <SearchBox>
            <Stroke w={22} h={22} sw={2} color="#222">
              <circle cx="10" cy="10" r="7" />
              <path d="M15 15 L20 20" />
            </Stroke>
            <SearchLabel>Search</SearchLabel>
            <FairScene />
          </SearchBox>
          <DockSlot>
            <TaskView />
          </DockSlot>
          <DockSlot>
            <Copilot />
          </DockSlot>
          <DockSlot $open>
            <Explorer />
          </DockSlot>
          <DockSlot>
            <Edge />
          </DockSlot>
          <DockSlot>
            <Store />
            <DockBadge>1</DockBadge>
          </DockSlot>
          <DockSlot>
            <Outlook />
          </DockSlot>
          <DockSlot $active>
            <BraveMark size={30} />
          </DockSlot>
          <DockSlot $open>
            <VSCode />
          </DockSlot>
        </Dock>

        <Tray>
          <TraySlot $w={28}>
            <Stroke w={16} h={10} sw={1.5} color="#1c1c1c">
              <path d="M2 8 L8 2 L14 8" />
            </Stroke>
          </TraySlot>
          <TraySlot $w={52}>
            <Stroke w={22} h={22} sw={1.2} color="#1c1c1c">
              <path d="M2 10 C3 3 14 0 19 6 M20 1.500 V6.500 H15 M20 12 C19 19 8 22 3 16 M2 20.500 V15.500 H7" />
            </Stroke>
            <SyncDot />
          </TraySlot>
          <Lang>
            ENG
            <br />
            IN
          </Lang>
          <TraySlot $w={28}>
            <Stroke w={22} h={18} sw={1.3} color="#1c1c1c">
              <path d="M1 6 C6 1 16 1 21 6 M4 9.500 C8 6 14 6 18 9.500 M7 12.500 C9.500 11 12.500 11 15 12.500" />
              <circle cx="11" cy="15.500" r="1.200" fill="#1c1c1c" />
            </Stroke>
          </TraySlot>
          <TraySlot $w={30}>
            <Stroke w={22} h={18} sw={1.2} color="#1c1c1c">
              <path d="M1 6.500 H4 L9 2.500 V15.500 L4 11.500 H1 Z M12 6 C13.500 8 13.500 10 12 12 M15 4 C17 7 17 11 15 14" />
            </Stroke>
          </TraySlot>
          <TraySlot $w={30}>
            <svg width="20" height="12" viewBox="0 0 20 12">
              <rect x="0.700" y="0.700" width="16.600" height="10.600" rx="2.500" fill="none" stroke="#1c1c1c" strokeWidth="1.300" />
              <rect x="2.500" y="2.500" width="13" height="7" rx="1" fill="#1c1c1c" />
              <rect x="18" y="4" width="2" height="4" rx="1" fill="#1c1c1c" />
            </svg>
          </TraySlot>
          <Clock>
            09:09
            <br />
            30-10-2025
          </Clock>
        </Tray>
      </Taskbar>
    </Screen>
  );
}
